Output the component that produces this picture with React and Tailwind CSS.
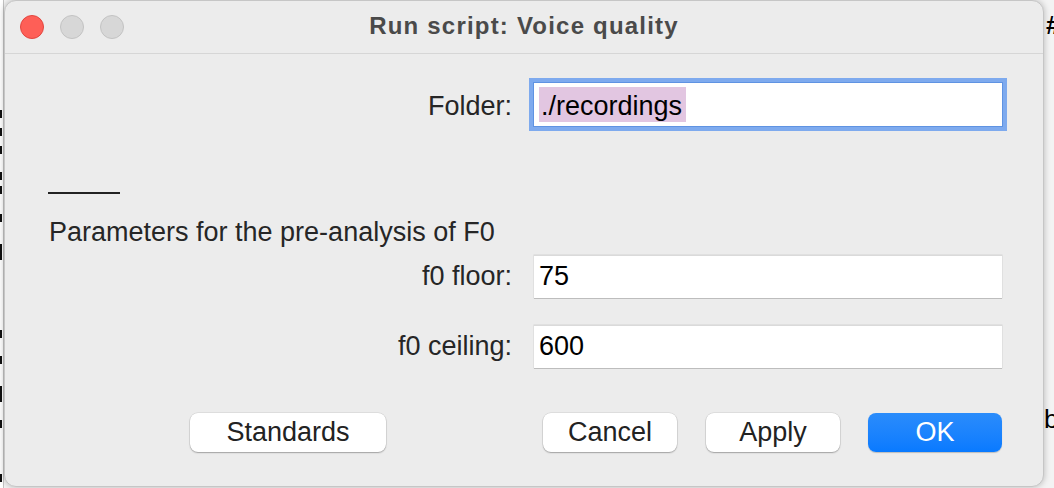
import React from "react";

const font = { fontFamily: '"Liberation Sans", Arial, sans-serif' };

function Field({ children, focused }) {
  return (
    <div
      className={
        "w-[468px] h-[43px] bg-white flex items-center pl-[5px] text-[27px] text-black " +
        (focused
          ? "shadow-[0_0_0_1px_#5f93e2,0_0_0_5px_#7eaaee]"
          : "border-t border-[#dadada] shadow-[0_1px_0_#bdbdbd,0_0_0_0.5px_#d4d4d4]")
      }
    >
      {children}
    </div>
  );
}

function Btn({ children, w = "w-[134px]", primary }) {
  return (
    <div
      className={
        w +
        " h-[39px] rounded-[8px] flex items-center justify-center text-[27px] leading-none " +
        (primary
          ? "bg-gradient-to-b from-[#2a8cfb] to-[#087aff] text-white shadow-[0_1px_1px_rgba(0,0,0,0.2)]"
          : "bg-white text-[#222] shadow-[0_1px_1.5px_rgba(0,0,0,0.28),0_0_0_0.5px_rgba(0,0,0,0.12)]")
      }
    >
      {children}
    </div>
  );
}

const frags = [110, 128, 146, 172, 186, 214, 244, 252, 330, 356, 386, 394, 420, 474];

export default function App() {
  return (
    <div className="w-[1054px] h-[488px] bg-[#f3f3f3] relative overflow-hidden" style={font}>
      {/* background window fragments */}
      <div className="absolute left-0 top-0 w-[4px] h-[488px] bg-white border-r border-[#c4c4c4]" />
      {frags.map((y) => (
        <div key={y} className="absolute left-0 w-[2px] h-[8px] bg-[#111]" style={{ top: y }} />
      ))}
      <div className="absolute left-[1046px] top-[12px] text-[26px] font-bold text-black leading-none">#</div>
      <div className="absolute left-[1044px] top-[406px] text-[26px] text-black leading-none">b</div>

      <div className="relative ml-[4px] w-[1040px] h-[487px] bg-[#ececec] rounded-[12px] border border-[#c6c6c6] shadow-[0_0_6px_rgba(0,0,0,0.25)] flex flex-col">
        {/* title bar */}
        <div className="h-[53px] border-b border-[#d6d6d6] flex items-center relative shrink-0">
          <div className="flex gap-[16px] pl-[15px]">
            <div className="w-[24px] h-[24px] rounded-full bg-[#fe5f57] border border-[#e2463f]" />
            <div className="w-[24px] h-[24px] rounded-full bg-[#d7d7d7] border border-[#c3c3c3]" />
            <div className="w-[24px] h-[24px] rounded-full bg-[#d7d7d7] border border-[#c3c3c3]" />
          </div>
          <div className="absolute inset-0 flex items-center justify-center pb-[3px] text-[24px] font-bold tracking-[1.2px] text-[#4a4a4a]">
            Run script: Voice quality
          </div>
        </div>

        {/* folder row */}
        <div className="flex items-center mt-[29px]">
          <div className="w-[507px] text-right text-[27px] text-[#262626] pt-[3px]">Folder:</div>
          <div className="ml-[22px]">
            <Field focused>
              <span className="bg-[#e2c6e1] h-[35px] flex items-center pl-[2px] pr-[4px] pt-[3px]">./recordings</span>
            </Field>
          </div>
        </div>

        {/* separator */}
        <div className="ml-[43px] mt-[65px] w-[72px] h-[2px] bg-[#222]" />

        <div className="ml-[44px] mt-[22px] text-[27px] leading-[32px] text-[#262626]">
          Parameters for the pre-analysis of F0
        </div>

        <div className="flex items-center mt-[7px]">
          <div className="w-[507px] text-right text-[27px] text-[#262626]">f0 floor:</div>
          <div className="ml-[22px]">
            <Field>75</Field>
          </div>
        </div>

        <div className="flex items-center mt-[27px]">
          <div className="w-[507px] text-right text-[27px] text-[#262626]">f0 ceiling:</div>
          <div className="ml-[22px]">
            <Field>600</Field>
          </div>
        </div>

        <div className="flex items-center mt-[45px] pl-[185px] pr-[41px]">
          <Btn w="w-[196px]">Standards</Btn>
          <div className="flex-1" />
          <Btn>Cancel</Btn>
          <div className="w-[29px]" />
          <Btn>Apply</Btn>
          <div className="w-[28px]" />
          <Btn primary>OK</Btn>
        </div>
      </div>
    </div>
  );
}
